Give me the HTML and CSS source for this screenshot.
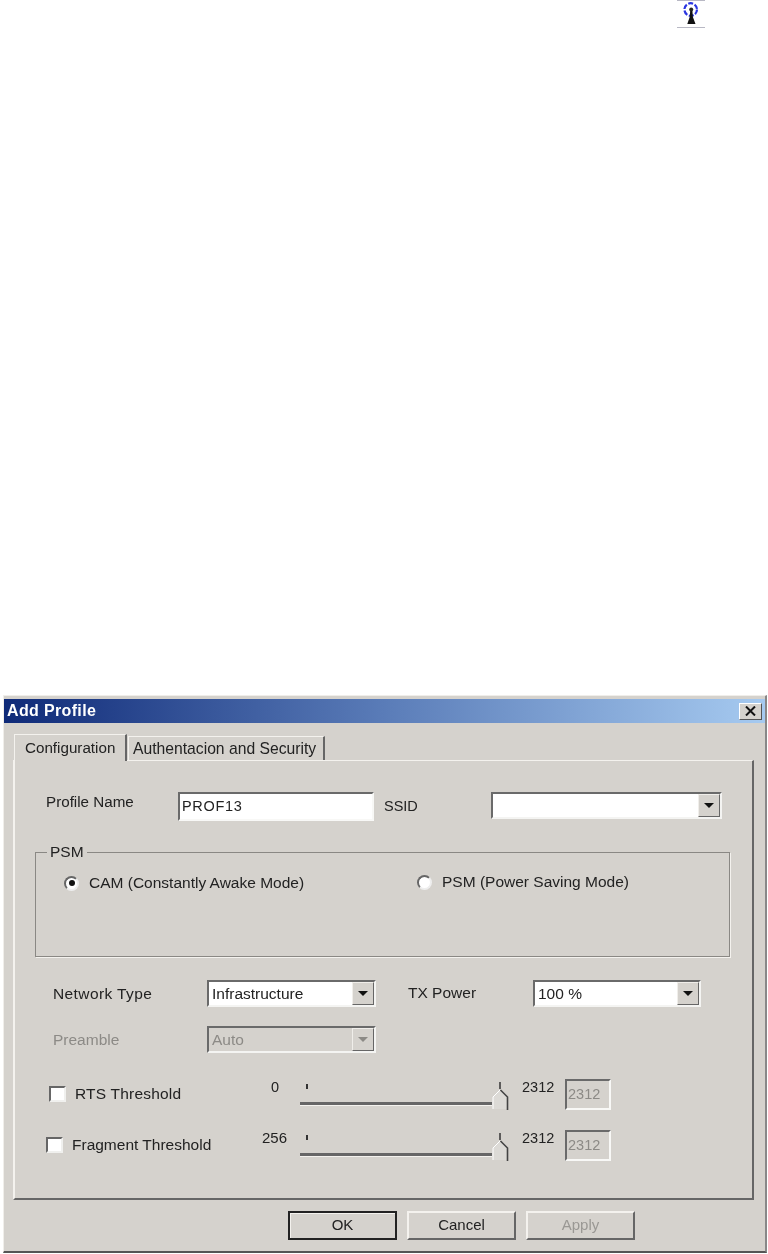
FILE: index.html
```html
<!DOCTYPE html>
<html lang="en">
<head>
<meta charset="UTF-8" />
<meta name="viewport" content="width=device-width, initial-scale=1" />
<title>Add Profile</title>
<link rel="stylesheet" href="styles.css">
</head>
<body>

<div class="top-icon">
  <svg width="28" height="28" viewBox="0 0 28 28">
    <rect x="0" y="0" width="28" height="1" fill="#b8b8c4"/>
    <rect x="0" y="27" width="28" height="1" fill="#b8b8c4"/>
    <circle cx="13.7" cy="9.5" r="6.3" fill="none" stroke="#2a35e0" stroke-width="2.2" stroke-dasharray="5 1.6"/>
    <circle cx="14.2" cy="9.5" r="2" fill="#222"/>
    <path d="M13.2 11h2.2l.5 6 2.6 7h-8.2l2.4-7z" fill="#111"/>
  </svg>
</div>

<div class="dialog">
  <div class="titlebar">
    <span class="title">Add Profile</span>
    <button class="close-btn">
      <svg width="11" height="10" viewBox="0 0 11 10"><path d="M1 0.5l9 9M10 0.5l-9 9" stroke="#111" stroke-width="2" fill="none"/></svg>
    </button>
  </div>

  <div class="tabs">
    <div class="tab active">Configuration</div>
    <div class="tab">Authentacion and Security</div>
  </div>

  <div class="panel">
    <div class="row row-profile">
      <span class="lbl lbl-profile">Profile Name</span>
      <div class="field field-profile">PROF13</div>
      <span class="lbl lbl-ssid">SSID</span>
      <div class="combo combo-ssid"><span class="combo-text"></span><span class="arrow"></span></div>
    </div>

    <div class="group">
      <span class="legend">PSM</span>
      <label class="radio-item radio-cam"><span class="radio checked"></span>CAM (Constantly Awake Mode)</label>
      <label class="radio-item radio-psm"><span class="radio"></span>PSM (Power Saving Mode)</label>
    </div>

    <div class="row row-network">
      <span class="lbl lbl-network">Network Type</span>
      <div class="combo combo-network"><span class="combo-text">Infrastructure</span><span class="arrow"></span></div>
      <span class="lbl lbl-tx">TX Power</span>
      <div class="combo combo-tx"><span class="combo-text">100 %</span><span class="arrow"></span></div>
    </div>

    <div class="row row-preamble">
      <span class="lbl lbl-network lbl-preamble disabled">Preamble</span>
      <div class="combo combo-network is-disabled"><span class="combo-text">Auto</span><span class="arrow"></span></div>
    </div>

    <div class="row row-rts">
      <label class="check-item check-rts"><span class="check"></span>RTS Threshold</label>
      <span class="min-val">0</span>
      <div class="slider">
        <span class="tick"></span>
        <span class="track"></span>
        <svg class="thumb" width="17" height="28" viewBox="0 0 17 28">
          <path d="M8 0v7" stroke="#333" stroke-width="1.5" fill="none"/>
          <path d="M1 27V15l7-7 7 7v12z" fill="#dcdad6"/>
          <path d="M8.5 8l7 7v13" stroke="#444" stroke-width="1.6" fill="none"/>
          <path d="M1 27V15l7-7" stroke="#fff" stroke-width="1" fill="none"/>
        </svg>
      </div>
      <span class="max-val">2312</span>
      <div class="field field-val">2312</div>
    </div>

    <div class="row row-frag">
      <label class="check-item check-frag"><span class="check"></span>Fragment Threshold</label>
      <span class="min-val min-frag">256</span>
      <div class="slider">
        <span class="tick"></span>
        <span class="track"></span>
        <svg class="thumb" width="17" height="28" viewBox="0 0 17 28">
          <path d="M8 0v7" stroke="#333" stroke-width="1.5" fill="none"/>
          <path d="M1 27V15l7-7 7 7v12z" fill="#dcdad6"/>
          <path d="M8.5 8l7 7v13" stroke="#444" stroke-width="1.6" fill="none"/>
          <path d="M1 27V15l7-7" stroke="#fff" stroke-width="1" fill="none"/>
        </svg>
      </div>
      <span class="max-val">2312</span>
      <div class="field field-val">2312</div>
    </div>
  </div>

  <div class="buttons">
    <button class="btn btn-default">OK</button>
    <button class="btn">Cancel</button>
    <button class="btn btn-disabled">Apply</button>
  </div>
</div>

</body>
</html>
```

FILE: styles.css
```css
html, body { margin: 0; padding: 0; background: #fff; }
body { width: 768px; height: 1254px; overflow: hidden; font-family: "Liberation Sans", Arial, sans-serif; font-size: 15.5px; color: #222; }

.top-icon { height: 695px; padding-left: 677px; box-sizing: border-box; }
.top-icon svg { display: block; filter: blur(0.4px); }

.dialog {
  width: 764px; height: 558px; margin-left: 3px; box-sizing: border-box;
  background: #d5d2cd; border-top: 1px solid #f0eeea; border-left: 1px solid #f0eeea;
  border-right: 2px solid #888; border-bottom: 2px solid #555;
  padding-top: 3px; filter: blur(0.35px);
}
.titlebar {
  height: 24px; display: flex; align-items: center; justify-content: space-between;
  padding: 0 3px 0 3px;
  background: linear-gradient(to right, #0f2a78, #5a7cb8 50%, #a6caf0);
}
.title { color: #fff; font-weight: bold; font-size: 16px; letter-spacing: 0.35px; }
.close-btn {
  width: 23px; height: 17px; padding: 0; display: flex; align-items: center; justify-content: center;
  background: #d5d2cd; border: 1px solid; border-color: #fff #555 #555 #fff;
}

.tabs { display: flex; align-items: flex-end; height: 37px; padding-left: 10px; }
.tab {
  height: 24px; line-height: 23px; padding: 0 7px 0 4px; box-sizing: border-box;
  border-top: 1px solid #f4f2ee; border-left: 1px solid #f4f2ee; border-right: 2px solid #666;
  font-size: 15.7px; white-space: nowrap; margin-left: 1px;
}
.tab.active { height: 27px; line-height: 25px; width: 113px; padding: 0 0 0 10px; margin-left: 0; position: relative; top: 1px; background: #d5d2cd; z-index: 1; font-size: 15.2px; }

.panel {
  width: 741px; height: 440px; margin-left: 9px; box-sizing: border-box;
  border-top: 1px solid #f4f2ee; border-left: 2px solid #f4f2ee;
  border-right: 2px solid #666; border-bottom: 2px solid #666;
  padding-top: 31px;
}

.row { display: flex; align-items: flex-start; }
.lbl { line-height: 20px; white-space: nowrap; }
.lbl-profile { margin-left: 31px; width: 132px; font-size: 15.2px; }
.lbl-ssid { margin: 4px 0 0 10px; width: 107px; font-size: 14.5px; }
.lbl-network { margin-left: 38px; width: 154px; line-height: 27px; letter-spacing: 0.4px; }
.lbl-preamble { letter-spacing: 0; }
.lbl-tx { margin-left: 32px; width: 125px; line-height: 26px; }
.disabled { color: #8c8a86; }

.field {
  box-sizing: border-box; background: #fff; border: 2px solid; border-color: #6a6a6a #f8f8f6 #f8f8f6 #6a6a6a;
  white-space: nowrap;
}
.field-profile { width: 196px; height: 29px; line-height: 24px; padding-left: 2px; font-size: 14.5px; letter-spacing: 0.7px; }
.field-val { width: 46px; height: 31px; line-height: 26px; padding-left: 1px; background: #d5d2cd; color: #8c8a86; margin-left: 9px; font-size: 14.5px; }

.combo {
  box-sizing: border-box; display: flex; justify-content: space-between; background: #fff;
  border: 2px solid; border-color: #6a6a6a #f4f4f2 #f4f4f2 #6a6a6a; height: 27px;
}
.combo-ssid { width: 231px; height: 27px; }
.combo-network { width: 169px; }
.combo-tx { width: 168px; }
.combo-text { padding-left: 3px; line-height: 24px; white-space: nowrap; }
.arrow {
  width: 22px; box-sizing: border-box; display: flex; align-items: center; justify-content: center;
  background: #d5d2cd; border: 1px solid; border-color: #f0eeea #666 #666 #f0eeea;
}
.arrow::after { content: ""; border-style: solid; border-width: 5px 5px 0; border-color: #111 transparent transparent; }
.is-disabled { background: #d5d2cd; color: #8c8a86; }
.is-disabled .arrow::after { border-top-color: #8c8a86; }

.group {
  position: relative; width: 695px; height: 105px; margin: 31px 0 0 20px; box-sizing: border-box;
  border: 1px solid #8a8884; box-shadow: 1px 1px 0 #f4f2ee; display: flex; align-items: flex-start;
  padding-top: 20px;
}
.legend { position: absolute; left: 11px; top: -10px; padding: 0 3px; line-height: 18px; background: #d5d2cd; }
.radio-item { display: flex; align-items: center; white-space: nowrap; line-height: 20px; }
.radio-cam { margin-left: 28px; width: 353px; }
.radio-psm { margin-top: -1px; }
.radio {
  width: 15px; height: 15px; box-sizing: border-box; border-radius: 50%; background: #fff;
  border: 2px solid; border-color: #666 #eee #eee #666; margin-right: 10px; position: relative;
}
.radio.checked::after {
  content: ""; position: absolute; left: 2.5px; top: 2.5px; width: 6px; height: 6px; border-radius: 50%; background: #111;
}

.row-network { margin-top: 23px; height: 27px; }
.row-preamble { margin-top: 19px; height: 27px; }
.row-rts { margin-top: 26px; height: 31px; position: relative; }
.row-frag { margin-top: 20px; height: 31px; }

.check-item { display: flex; align-items: center; white-space: nowrap; line-height: 20px; }
.check {
  width: 17px; height: 16px; box-sizing: border-box; background: #fff; border: 2px solid;
  border-color: #666 #f0f0ee #f0f0ee #666;
}
.check-rts { margin: 5px 0 0 34px; width: 222px; letter-spacing: 0.2px; }
.check-rts .check { margin-right: 9px; }
.check-frag { margin: 5px 0 0 31px; width: 216px; }
.check-frag .check { margin-right: 9px; }
.min-val { width: 29px; line-height: 16px; font-size: 14.5px; }
.min-frag { width: 38px; font-size: 15px; }

.slider { position: relative; width: 208px; height: 31px; flex-shrink: 0; }
.tick { position: absolute; left: 6px; top: 5px; width: 1.5px; height: 5px; background: #333; }
.track { position: absolute; left: 0; right: 16px; top: 23px; height: 3px; background: #666; box-shadow: 0 1px 0 #f4f2ee; }
.thumb { position: absolute; left: 192px; top: 3px; }

.max-val { margin-left: 14px; line-height: 16px; width: 34px; font-size: 14.5px; }

.buttons { display: flex; gap: 10px; padding-left: 284px; margin-top: 11px; }
.btn {
  width: 109px; height: 29px; padding: 0 0 3px; font: inherit; font-size: 15px; color: #222; background: #d5d2cd;
  border: 2px solid; border-color: #f4f2ee #666 #666 #f4f2ee;
}
.btn-default { border-color: #222; box-shadow: inset 1px 1px 0 #f4f2ee; }
.btn-disabled { color: #9a9894; }
```
